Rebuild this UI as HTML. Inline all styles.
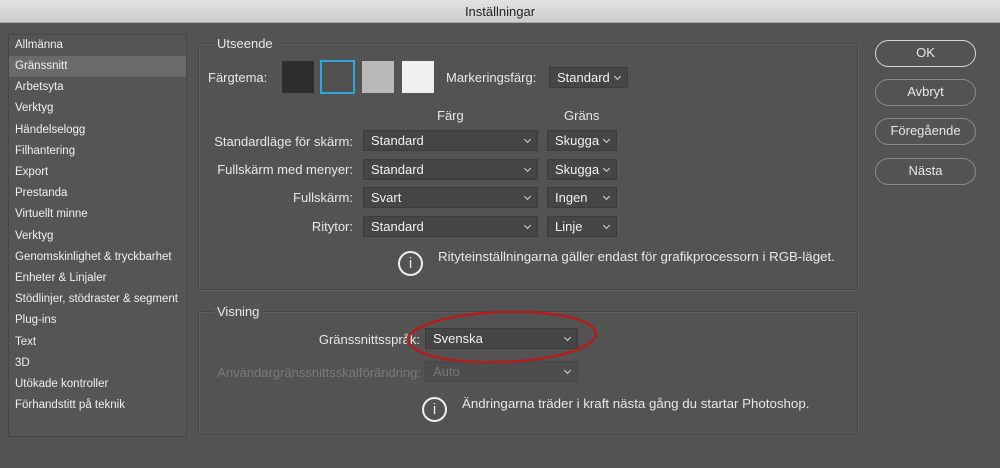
<!DOCTYPE html>
<html><head><meta charset="utf-8"><style>
*{margin:0;padding:0;box-sizing:border-box}
body{width:1000px;height:468px;background:#535353;font-family:"Liberation Sans",sans-serif;color:#e8e8e8;position:relative;overflow:hidden;font-size:13px}
.a{position:absolute;white-space:nowrap}
#title{left:0;top:0;width:1000px;height:23px;background:linear-gradient(#e2e2e2,#cdcdcd);border-bottom:1px solid #a8a8a8;color:#222;text-align:center;line-height:23px;font-size:13px}
#side{left:8px;top:34px;width:179px;height:403px;border:1px solid #474747;background:#555}
.si{position:absolute;left:0;width:177px;height:21px;line-height:21px;padding-left:6px;font-size:11.5px;color:#f0f0f0}
.box{border:1px solid #464646;box-shadow:inset 1px 1px 0 #5e5e5e,1px 1px 0 #5e5e5e}
.lg{background:#535353;padding:0 4px;font-size:13px}
.dd{position:absolute;background:#454545;border:1px solid #3c3c3c;height:21px;line-height:19px;padding-left:7px;font-size:13px;color:#f2f2f2}
.dd:after{content:"";position:absolute;right:7px;top:6px;width:4px;height:4px;border-right:1.3px solid #ddd;border-bottom:1.3px solid #ddd;transform:rotate(45deg)}
.lb{text-align:right;font-size:13px}
.btn{position:absolute;left:875px;width:101px;height:27px;border:1.5px solid #8a8a8a;border-radius:14px;text-align:center;line-height:24px;font-size:13px}
.info{position:absolute;width:25px;height:25px;border:2px solid #eee;border-radius:50%;text-align:center;font-family:"Liberation Sans",sans-serif;font-size:15px;line-height:21px}
.t13{font-size:13.3px}
</style></head><body>
<div id="title" class="a">Inställningar</div>
<div id="side" class="a">
<div class="si" style="top:0">Allmänna</div>
<div class="si" style="top:21px;background:#6a6a6a">Gränssnitt</div>
<div class="si" style="top:42px">Arbetsyta</div>
<div class="si" style="top:63px">Verktyg</div>
<div class="si" style="top:85px">Händelselogg</div>
<div class="si" style="top:106px">Filhantering</div>
<div class="si" style="top:127px">Export</div>
<div class="si" style="top:148px">Prestanda</div>
<div class="si" style="top:169px">Virtuellt minne</div>
<div class="si" style="top:191px">Verktyg</div>
<div class="si" style="top:212px">Genomskinlighet &amp; tryckbarhet</div>
<div class="si" style="top:233px">Enheter &amp; Linjaler</div>
<div class="si" style="top:254px">Stödlinjer, stödraster &amp; segment</div>
<div class="si" style="top:275px">Plug-ins</div>
<div class="si" style="top:297px">Text</div>
<div class="si" style="top:318px">3D</div>
<div class="si" style="top:339px">Utökade kontroller</div>
<div class="si" style="top:360px">Förhandstitt på teknik</div>
</div>

<div class="a box" style="left:198px;top:43px;width:660px;height:247px"></div>
<div class="a lg" style="left:213px;top:36px">Utseende</div>
<div class="a" style="left:208px;top:70px">Färgtema:</div>
<div class="a" style="left:282px;top:61px;width:32px;height:32px;background:#2e2e2e"></div>
<div class="a" style="left:320px;top:60px;width:35px;height:34px;background:#505050;border:2px solid #2ba8de"></div>
<div class="a" style="left:362px;top:61px;width:32px;height:32px;background:#b8b8b8"></div>
<div class="a" style="left:402px;top:61px;width:32px;height:32px;background:#f0f0f0"></div>
<div class="a" style="left:446px;top:70px">Markeringsfärg:</div>
<div class="dd" style="left:549px;top:67px;width:79px">Standard</div>
<div class="a" style="left:437px;top:108px">Färg</div>
<div class="a" style="left:564px;top:108px">Gräns</div>
<div class="a lb" style="left:200px;width:153px;top:134px">Standardläge för skärm:</div>
<div class="a lb" style="left:200px;width:153px;top:162px">Fullskärm med menyer:</div>
<div class="a lb" style="left:200px;width:153px;top:190px">Fullskärm:</div>
<div class="a lb" style="left:200px;width:153px;top:219px">Ritytor:</div>
<div class="dd" style="left:363px;top:130px;width:175px">Standard</div>
<div class="dd" style="left:363px;top:159px;width:175px">Standard</div>
<div class="dd" style="left:363px;top:187px;width:175px">Svart</div>
<div class="dd" style="left:363px;top:216px;width:175px">Standard</div>
<div class="dd" style="left:547px;top:130px;width:70px">Skugga</div>
<div class="dd" style="left:547px;top:159px;width:70px">Skugga</div>
<div class="dd" style="left:547px;top:187px;width:70px">Ingen</div>
<div class="dd" style="left:547px;top:216px;width:70px">Linje</div>
<div class="info" style="left:398px;top:251px">i</div>
<div class="a t13" style="left:438px;top:249px">Rityteinställningarna gäller endast för grafikprocessorn i RGB-läget.</div>

<div class="a box" style="left:198px;top:311px;width:660px;height:124px"></div>
<div class="a lg" style="left:213px;top:304px">Visning</div>
<div class="a lb" style="left:250px;width:170px;top:332px">Gränssnittsspråk:</div>
<div class="dd" style="left:425px;top:328px;width:153px">Svenska</div>
<div class="a lb" style="left:200px;width:221px;top:365px;color:#7a7a7a">Användargränssnittsskalförändring:</div>
<div class="dd" style="left:425px;top:361px;width:153px;color:#777;background:#4d4d4d;border-color:#484848">Auto</div>
<div class="info" style="left:422px;top:397px">i</div>
<div class="a t13" style="left:462px;top:396px">Ändringarna träder i kraft nästa gång du startar Photoshop.</div>
<svg class="a" style="left:400px;top:306px" width="200" height="62"><ellipse cx="102" cy="31" rx="94" ry="25" fill="none" stroke="#b51d1d" stroke-width="2.5" transform="rotate(-2 100 31)"/></svg>

<div class="btn" style="top:40px;border-color:#d8d8d8">OK</div>
<div class="btn" style="top:79px">Avbryt</div>
<div class="btn" style="top:118px">Föregående</div>
<div class="btn" style="top:158px">Nästa</div>
</body></html>
